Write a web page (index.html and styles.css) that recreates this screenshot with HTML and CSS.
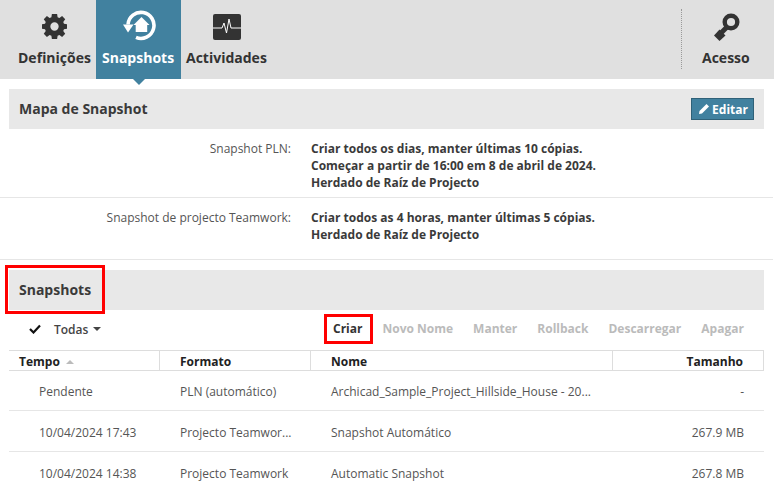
FILE: index.html
```html
<!DOCTYPE html>
<html lang="pt">
<head>
<meta charset="utf-8">
<title>Snapshots</title>
<link rel="stylesheet" href="styles.css">
</head>
<body>
<header class="topbar">
  <nav class="tabs">
    <a class="tab tab-def">
      <svg class="tab-icon" viewBox="0 0 24 24" width="25" height="25"><path fill="#333" fill-rule="evenodd" d="M9.500 0h5l.5 3.200 1.700.7L19.300 2l3 3-1.900 2.600.7 1.700 3 .5v4.400l-3 .5-.7 1.700 1.900 2.600-3 3-2.600-1.900-1.700.7-.5 3.200h-5L9 20.800l-1.700-.7L4.700 22l-3-3 1.900-2.600-.7-1.700-3-.5V9.800l3-.5.7-1.700L1.700 5l3-3 2.600 1.900L9 3.200zM12 8a4 4 0 1 0 0 8 4 4 0 0 0 0-8z"/></svg>
      <span>Definições</span>
    </a>
    <a class="tab tab-snap active">
      <svg class="tab-icon" viewBox="0 0 36 32" width="36" height="32"><path fill="none" stroke="#fff" stroke-width="3.600" d="M6 14.500A13 13 0 1 1 14 27.400"/><path fill="#fff" d="M1 14.500h10.500L6 22.500z"/><path fill="#fff" d="M19.500 7l8 8h-2.300v7h-11.500v-7h-2.200z"/></svg>
      <span>Snapshots</span>
    </a>
    <a class="tab tab-act">
      <svg class="tab-icon" viewBox="0 0 28 26" width="28" height="26"><rect width="28" height="26" rx="2" fill="#333"/><path fill="none" stroke="#fff" stroke-width="1" d="M0 14h9l2-5 2.500 10 2.500-14 2 9h10"/></svg>
      <span>Actividades</span>
    </a>
    <a class="tab tab-access">
      <svg class="tab-icon" viewBox="0 0 26 28" width="26" height="28"><circle cx="17" cy="9" r="6.300" fill="none" stroke="#333" stroke-width="4.400"/><path stroke="#333" stroke-width="5" d="M14 13L6 21"/><path fill="#333" d="M5.500 16.500l6 6-6 5.500-5.500-5.500z"/></svg>
      <span>Acesso</span>
    </a>
  </nav>
</header>

<main class="content">
  <section class="panel-map">
    <div class="section-head">
      <h2>Mapa de Snapshot</h2>
      <button class="edit-btn"><svg viewBox="0 0 10 10" width="10" height="10"><path fill="#fff" d="M7.500 0L10 2.500 3 9.500 0 10l.5-3z"/></svg>Editar</button>
    </div>
    <div class="map-row map-row-a">
      <div class="map-label">Snapshot PLN:</div>
      <div class="map-value">Criar todos os dias, manter últimas 10 cópias.<br>Começar a partir de 16:00 em 8 de abril de 2024.<br>Herdado de Raíz de Projecto</div>
    </div>
    <div class="map-row map-row-b">
      <div class="map-label">Snapshot de projecto Teamwork:</div>
      <div class="map-value">Criar todos as 4 horas, manter últimas 5 cópias.<br>Herdado de Raíz de Projecto</div>
    </div>
  </section>

  <section class="panel-snaps">
    <div class="section-head"><h2>Snapshots</h2></div>
    <div class="toolbar">
      <div class="filter">
        <svg viewBox="0 0 12 10" width="12" height="10"><path fill="none" stroke="#111" stroke-width="2.200" d="M1 5l3.500 3.500L11 1.500"/></svg>
        <span>Todas</span><i class="caret"></i>
      </div>
      <div class="actions">
        <span class="act on">Criar</span>
        <span class="act">Novo Nome</span>
        <span class="act">Manter</span>
        <span class="act">Rollback</span>
        <span class="act">Descarregar</span>
        <span class="act">Apagar</span>
      </div>
    </div>
    <div class="grid grid-head">
      <div class="cell c-time">Tempo<i class="sort"></i></div>
      <div class="cell">Formato</div>
      <div class="cell">Nome</div>
      <div class="cell c-size">Tamanho</div>
    </div>
    <div class="grid grid-row">
      <div class="cell c-pend">Pendente</div>
      <div class="cell">PLN (automático)</div>
      <div class="cell">Archicad_Sample_Project_Hillside_House - 20...</div>
      <div class="cell c-size">-</div>
    </div>
    <div class="grid grid-row">
      <div class="cell c-pend">10/04/2024 17:43</div>
      <div class="cell">Projecto Teamwor...</div>
      <div class="cell">Snapshot Automático</div>
      <div class="cell c-size">267.9 MB</div>
    </div>
    <div class="grid grid-row">
      <div class="cell c-pend">10/04/2024 14:38</div>
      <div class="cell">Projecto Teamwork</div>
      <div class="cell">Automatic Snapshot</div>
      <div class="cell c-size">267.8 MB</div>
    </div>
  </section>
</main>

<div class="mark mark-head"></div>
<div class="mark mark-criar"></div>
</body>
</html>
```

FILE: styles.css
```css
* { box-sizing: border-box; }
html, body { margin: 0; height: 492px; overflow: hidden; }
body { position: relative; background: #fff; font-family: "Open Sans", sans-serif; font-size: 12px; color: #444; }

.topbar { height: 79px; background: #e0e0e0; }
.tabs { display: flex; height: 79px; }
.tab { position: relative; display: flex; flex-direction: column; align-items: center; font-size: 14px; font-weight: 700; color: #333; height: 79px; }
.tab span { position: absolute; top: 48px; white-space: nowrap; line-height: 20px; }
.tab-icon { position: absolute; }
.tab-def { width: 96px; }
.tab-def .tab-icon { top: 14px; left: 42px; }
.tab-def span { left: 18px; }
.tab-snap { width: 85px; background: #41819f; color: #fff; }
.tab-snap .tab-icon { top: 10px; left: 26px; }
.tab-snap span { left: 6px; }
.tab-snap::after { content: ""; position: absolute; left: 37px; top: 79px; border: 6px solid transparent; border-top-color: #41819f; border-bottom: 0; }
.tab-act { width: 90px; }
.tab-act .tab-icon { top: 14px; left: 32px; }
.tab-act span { left: 5px; }
.tab-access { width: 93px; margin-left: auto; border: 0; }
.tab-access::before { content: ""; position: absolute; left: 0; top: 9px; height: 60px; border-left: 1px dotted #999; }
.tab-access .tab-icon { top: 13px; left: 33px; }
.tab-access span { left: 21px; }

.content { padding: 10px 10px 0 9px; }
.section-head { height: 40px; background: #e8e8e8; display: flex; align-items: center; justify-content: space-between; padding: 0 10px; }
.section-head h2 { margin: 0 0 2px; font-size: 14px; font-weight: 700; color: #3a3a3a; }
.edit-btn { display: flex; align-items: center; gap: 3px; height: 22px; padding: 0 5px 0 7px; border: 1px solid #2f6178; background: #41819f; color: #fff; font: 700 12px "Open Sans", sans-serif; }

.map-row { display: grid; grid-template-columns: 282px 1fr; column-gap: 20px; margin: 0 -9px; padding-left: 9px; border-bottom: 1px solid #e6e6e6; line-height: 17px; }
.map-row-a { height: 69px; padding-top: 11px; }
.map-row-b { height: 62px; padding-top: 11px; }
.map-label { text-align: right; color: #555; }
.map-value { font-weight: 700; color: #3a3a3a; }

.panel-snaps { margin-top: 10px; }
.toolbar { display: flex; height: 40px; align-items: center; padding-bottom: 2px; }
.filter { display: flex; align-items: center; width: 324px; padding-left: 20px; font-weight: 600; color: #444; }
.filter span { margin-left: 13px; }
.caret { margin-left: 5px; border: 4px solid transparent; border-top-color: #444; border-bottom: 0; }
.actions { display: flex; gap: 20px; margin-top: -2px; font-weight: 700; color: #bbb; }
.act.on { color: #333; }

.grid { display: grid; grid-template-columns: 151px 151px 302px 151px; }
.grid-head { height: 21px; margin-bottom: -1px; border-top: 1px solid #ddd; border-bottom: 1px solid #ddd; font-weight: 700; color: #222; line-height: 21px; }
.grid-head .cell { height: 19px; border-right: 1px solid #ddd; padding-left: 20px; }
.grid-head .cell:first-child { padding-left: 10px; }
.grid-head .c-size, .grid-row .c-size { text-align: right; padding: 0 20px 0 0; }
.sort { display: inline-block; margin-left: 6px; margin-bottom: 2px; border: 4px solid transparent; border-bottom-color: #bbb; border-top: 0; }
.grid-row { height: 41px; align-items: center; padding-top: 2px; border-bottom: 1px solid #e6e6e6; color: #555; }
.grid-row .cell { padding-left: 20px; white-space: nowrap; }
.grid-row .c-pend { padding-left: 30px; }
.grid-row .c-size { padding-left: 0; }

.mark { position: absolute; border: 3px solid #f00; }
.mark-head { left: 5px; top: 265px; width: 100px; height: 49px; }
.mark-criar { left: 324px; top: 314px; width: 49px; height: 30px; }
```
